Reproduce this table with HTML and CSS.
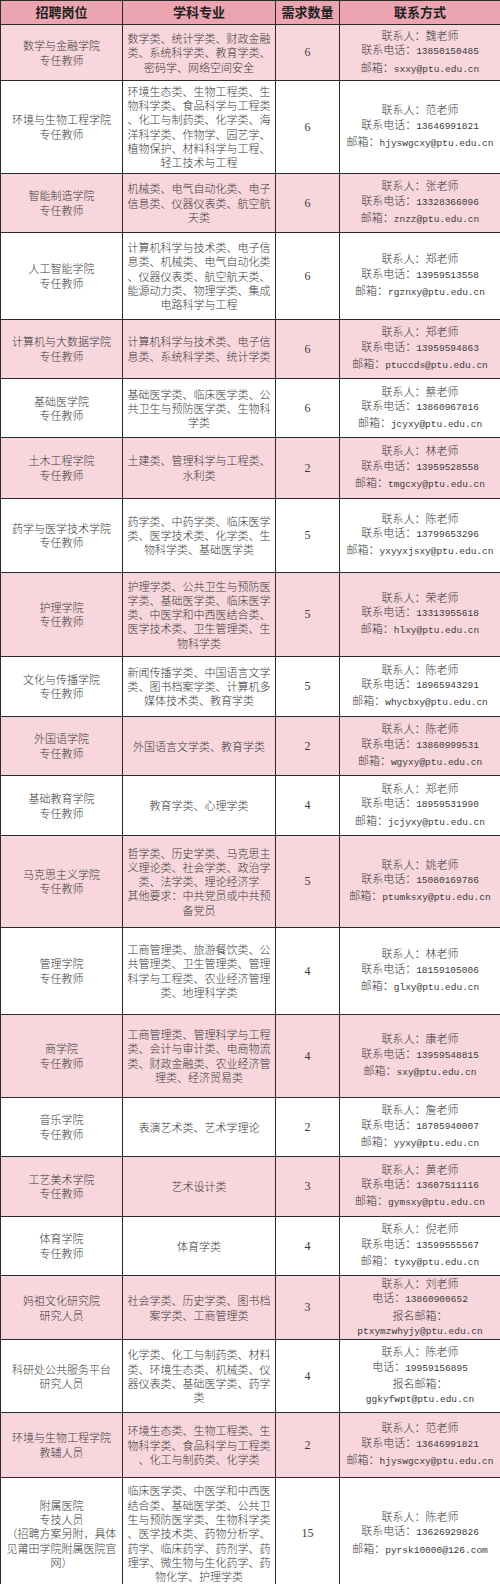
FILE: index.html
```html
<!DOCTYPE html>
<html lang="zh-CN">
<head>
<meta charset="utf-8">
<title>招聘岗位</title>
<link rel="stylesheet" href="styles.css">
</head>
<body>
<table class="jobs">
<colgroup><col class="c1"><col class="c2"><col class="c3"><col class="c4"></colgroup>
<thead>
<tr><th>招聘岗位</th><th>学科专业</th><th>需求数量</th><th>联系方式</th></tr>
</thead>
<tbody>
<tr class="pink"><td>数学与金融学院<br>专任教师</td><td class="major">数学类、统计学类、财政金融<br>类、系统科学类、教育学类、<br>密码学、网络空间安全</td><td class="num">6</td><td>联系人：魏老师<br>联系电话：<span class="m">13850150485</span><br>邮箱：<span class="m">sxxy@ptu.edu.cn</span></td></tr>
<tr><td>环境与生物工程学院<br>专任教师</td><td class="major">环境生态类、生物工程类、生<br>物科学类、食品科学与工程类<br>、化工与制药类、化学类、海<br>洋科学类、作物学、园艺学、<br>植物保护、材料科学与工程、<br>轻工技术与工程</td><td class="num">6</td><td>联系人：范老师<br>联系电话：<span class="m">13646991821</span><br>邮箱：<span class="m">hjyswgcxy@ptu.edu.cn</span></td></tr>
<tr class="pink"><td>智能制造学院<br>专任教师</td><td class="major">机械类、电气自动化类、电子<br>信息类、仪器仪表类、航空航<br>天类</td><td class="num">6</td><td>联系人：张老师<br>联系电话：<span class="m">13328366096</span><br>邮箱：<span class="m">znzz@ptu.edu.cn</span></td></tr>
<tr><td>人工智能学院<br>专任教师</td><td class="major">计算机科学与技术类、电子信<br>息类、机械类、电气自动化类<br>、仪器仪表类、航空航天类、<br>能源动力类、物理学类、集成<br>电路科学与工程</td><td class="num">6</td><td>联系人：郑老师<br>联系电话：<span class="m">13959513558</span><br>邮箱：<span class="m">rgznxy@ptu.edu.cn</span></td></tr>
<tr class="pink"><td>计算机与大数据学院<br>专任教师</td><td class="major">计算机科学与技术类、电子信<br>息类、系统科学类、统计学类</td><td class="num">6</td><td>联系人：郑老师<br>联系电话：<span class="m">13959594863</span><br>邮箱：<span class="m">ptuccds@ptu.edu.cn</span></td></tr>
<tr><td>基础医学院<br>专任教师</td><td class="major">基础医学类、临床医学类、公<br>共卫生与预防医学类、生物科<br>学类</td><td class="num">6</td><td>联系人：蔡老师<br>联系电话：<span class="m">13860967816</span><br>邮箱：<span class="m">jcyxy@ptu.edu.cn</span></td></tr>
<tr class="pink"><td>土木工程学院<br>专任教师</td><td class="major">土建类、管理科学与工程类、<br>水利类</td><td class="num">2</td><td>联系人：林老师<br>联系电话：<span class="m">13959528558</span><br>邮箱：<span class="m">tmgcxy@ptu.edu.cn</span></td></tr>
<tr><td>药学与医学技术学院<br>专任教师</td><td class="major">药学类、中药学类、临床医学<br>类、医学技术类、化学类、生<br>物科学类、基础医学类</td><td class="num">5</td><td>联系人：陈老师<br>联系电话：<span class="m">13799653296</span><br>邮箱：<span class="m">yxyyxjsxy@ptu.edu.cn</span></td></tr>
<tr class="pink"><td>护理学院<br>专任教师</td><td class="major">护理学类、公共卫生与预防医<br>学类、基础医学类、临床医学<br>类、中医学和中西医结合类、<br>医学技术类、卫生管理类、生<br>物科学类</td><td class="num">5</td><td>联系人：荣老师<br>联系电话：<span class="m">13313955618</span><br>邮箱：<span class="m">hlxy@ptu.edu.cn</span></td></tr>
<tr><td>文化与传播学院<br>专任教师</td><td class="major">新闻传播学类、中国语言文学<br>类、图书档案学类、计算机多<br>媒体技术类、教育学类</td><td class="num">5</td><td>联系人：陈老师<br>联系电话：<span class="m">18965943291</span><br>邮箱：<span class="m">whycbxy@ptu.edu.cn</span></td></tr>
<tr class="pink"><td>外国语学院<br>专任教师</td><td class="major">外国语言文学类、教育学类</td><td class="num">2</td><td>联系人：陈老师<br>联系电话：<span class="m">13860999531</span><br>邮箱：<span class="m">wgyxy@ptu.edu.cn</span></td></tr>
<tr><td>基础教育学院<br>专任教师</td><td class="major">教育学类、心理学类</td><td class="num">4</td><td>联系人：郑老师<br>联系电话：<span class="m">18959531990</span><br>邮箱：<span class="m">jcjyxy@ptu.edu.cn</span></td></tr>
<tr class="pink"><td>马克思主义学院<br>专任教师</td><td class="major">哲学类、历史学类、马克思主<br>义理论类、社会学类、政治学<br>类、法学类、理论经济学<br>其他要求：中共党员或中共预<br>备党员</td><td class="num">5</td><td>联系人：姚老师<br>联系电话：<span class="m">15080169786</span><br>邮箱：<span class="m">ptumksxy@ptu.edu.cn</span></td></tr>
<tr><td>管理学院<br>专任教师</td><td class="major">工商管理类、旅游餐饮类、公<br>共管理类、卫生管理类、管理<br>科学与工程类、农业经济管理<br>类、地理科学类</td><td class="num">4</td><td>联系人：林老师<br>联系电话：<span class="m">18159105006</span><br>邮箱：<span class="m">glxy@ptu.edu.cn</span></td></tr>
<tr class="pink"><td>商学院<br>专任教师</td><td class="major">工商管理类、管理科学与工程<br>类、会计与审计类、电商物流<br>类、财政金融类、农业经济管<br>理类、经济贸易类</td><td class="num">4</td><td>联系人：康老师<br>联系电话：<span class="m">13959548815</span><br>邮箱：<span class="m">sxy@ptu.edu.cn</span></td></tr>
<tr><td>音乐学院<br>专任教师</td><td class="major">表演艺术类、艺术学理论</td><td class="num">2</td><td>联系人：詹老师<br>联系电话：<span class="m">18705940007</span><br>邮箱：<span class="m">yyxy@ptu.edu.cn</span></td></tr>
<tr class="pink"><td>工艺美术学院<br>专任教师</td><td class="major">艺术设计类</td><td class="num">3</td><td>联系人：黄老师<br>联系电话：<span class="m">13607511116</span><br>邮箱：<span class="m">gymsxy@ptu.edu.cn</span></td></tr>
<tr><td>体育学院<br>专任教师</td><td class="major">体育学类</td><td class="num">4</td><td>联系人：倪老师<br>联系电话：<span class="m">13599555567</span><br>邮箱：<span class="m">tyxy@ptu.edu.cn</span></td></tr>
<tr class="pink"><td>妈祖文化研究院<br>研究人员</td><td class="major">社会学类、历史学类、图书档<br>案学类、工商管理类</td><td class="num">3</td><td>联系人：刘老师<br>电话：<span class="m">13860900652</span><br>报名邮箱：<br><span class="m">ptxymzwhyjy@ptu.edu.cn</span></td></tr>
<tr><td>科研处公共服务平台<br>研究人员</td><td class="major">化学类、化工与制药类、材料<br>类、环境生态类、机械类、仪<br>器仪表类、基础医学类、药学<br>类</td><td class="num">4</td><td>联系人：陈老师<br>电话：<span class="m">19959156895</span><br>报名邮箱：<br><span class="m">ggkyfwpt@ptu.edu.cn</span></td></tr>
<tr class="pink"><td>环境与生物工程学院<br>教辅人员</td><td class="major">环境生态类、生物工程类、生<br>物科学类、食品科学与工程类<br>、化工与制药类、化学类</td><td class="num">2</td><td>联系人：范老师<br>联系电话：<span class="m">13646991821</span><br>邮箱：<span class="m">hjyswgcxy@ptu.edu.cn</span></td></tr>
<tr><td>附属医院<br>专技人员<br>（招聘方案另附，具体<br>见莆田学院附属医院官<br>网）</td><td class="major">临床医学类、中医学和中西医<br>结合类、基础医学类、公共卫<br>生与预防医学类、生物科学类<br>、医学技术类、药物分析学、<br>药学、临床药学、药剂学、药<br>理学、微生物与生化药学、药<br>物化学、护理学类</td><td class="num">15</td><td>联系人：陈老师<br>联系电话：<span class="m">13626929826</span><br>邮箱：<span class="m">pyrsk10000@126.com</span></td></tr>
</tbody>
</table>
</body>
</html>
```

FILE: styles.css
```css
html, body {
  margin: 0;
  padding: 0;
  background: #ffffff;
}

body {
  font-family: "Noto Sans CJK SC", sans-serif;
  font-weight: 300;
  color: #3a3a3a;
  font-size: 11px;
  line-height: 14.3px;
}

.jobs {
  width: 500px;
  border-collapse: collapse;
  table-layout: fixed;
}

.jobs .c1 { width: 122px; }
.jobs .c2 { width: 153px; }
.jobs .c3 { width: 64px; }
.jobs .c4 { width: 161px; }

.jobs th,
.jobs td {
  border: 1.5px solid #2a2a2a;
  padding: 0 2px;
  text-align: center;
  vertical-align: middle;
}

.jobs th {
  background: #eba4b0;
  font-weight: 700;
  font-size: 13px;
  color: #222222;
  height: 23px;
}

.jobs tr.pink td {
  background: #f8d6dd;
}

.jobs td.major {
  white-space: nowrap;
}

.jobs td.num {
  font-family: "Liberation Serif", serif;
  font-weight: 400;
  font-size: 12px;
}

.m {
  font-family: "Liberation Mono", monospace;
  font-weight: 400;
  font-size: 9.5px;
}

.jobs tbody tr:nth-child(1) { height: 56px; }
.jobs tbody tr:nth-child(2) { height: 92.5px; }
.jobs tbody tr:nth-child(3) { height: 59.5px; }
.jobs tbody tr:nth-child(4) { height: 86.5px; }
.jobs tbody tr:nth-child(5) { height: 59.5px; }
.jobs tbody tr:nth-child(6) { height: 59px; }
.jobs tbody tr:nth-child(7) { height: 60.5px; }
.jobs tbody tr:nth-child(8) { height: 74px; }
.jobs tbody tr:nth-child(9) { height: 84.5px; }
.jobs tbody tr:nth-child(10) { height: 59.5px; }
.jobs tbody tr:nth-child(11) { height: 59.5px; }
.jobs tbody tr:nth-child(12) { height: 60px; }
.jobs tbody tr:nth-child(13) { height: 91.5px; }
.jobs tbody tr:nth-child(14) { height: 87.5px; }
.jobs tbody tr:nth-child(15) { height: 82.5px; }
.jobs tbody tr:nth-child(16) { height: 59.5px; }
.jobs tbody tr:nth-child(17) { height: 59.5px; }
.jobs tbody tr:nth-child(18) { height: 59.5px; }
.jobs tbody tr:nth-child(19) { height: 59px; }
.jobs tbody tr:nth-child(20) { height: 72.5px; }
.jobs tbody tr:nth-child(21) { height: 65px; }
.jobs tbody tr:nth-child(22) { height: 112.5px; }
```
